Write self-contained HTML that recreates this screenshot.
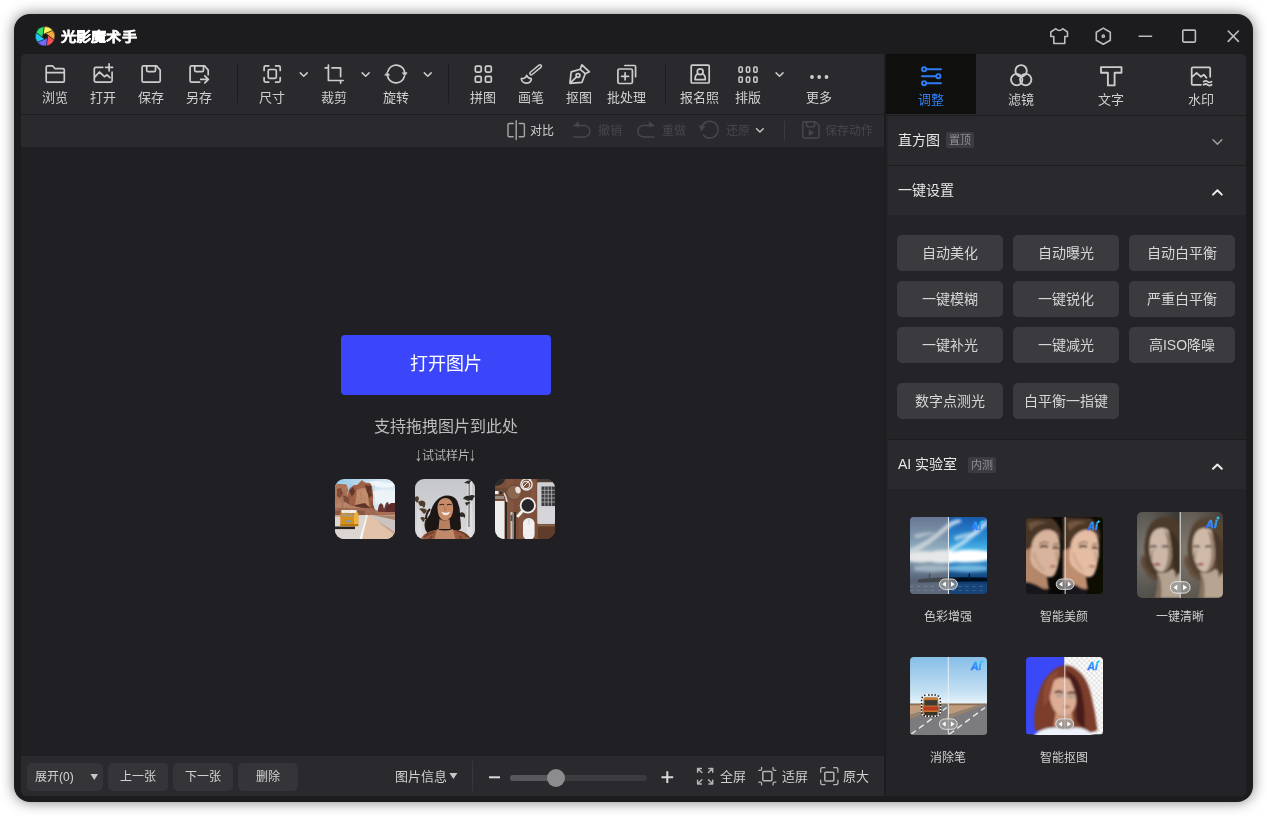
<!DOCTYPE html>
<html lang="zh-CN">
<head>
<meta charset="utf-8">
<title>光影魔术手</title>
<style>
*{box-sizing:border-box;margin:0;padding:0}
html,body{width:1267px;height:816px;overflow:hidden;background:#fff}
body{font-family:"Liberation Sans",sans-serif;position:relative;color:#d2d2d2;font-size:13px;line-height:1}
#root{position:absolute;left:0;top:0;width:1267px;height:816px;will-change:transform}
.abs{position:absolute}
#win{position:absolute;left:14px;top:14px;width:1239px;height:788px;background:#1c1c1e;border-radius:16px;box-shadow:0 0 14px rgba(0,0,0,.5)}
#title{position:absolute;left:60.5px;top:27.3px;font-size:13px;font-weight:bold;color:#fff;letter-spacing:0;line-height:20px;white-space:nowrap;-webkit-text-stroke:.3px #fff;transform:scaleX(1.165);transform-origin:0 0}
#left{position:absolute;left:21px;top:54px;width:863px;height:742px;background:#201f24;border-radius:5px 0 0 5px;overflow:hidden}
#tb1{position:absolute;left:0;top:0;width:863px;height:60px;background:#2a2a2e}
#tb2{position:absolute;left:0;top:61px;width:863px;height:32px;background:#2a2a2e}
#tbline{position:absolute;left:0;top:60px;width:863px;height:1px;background:#1d1d20}
#bb{position:absolute;left:0;top:702px;width:863px;height:40px;background:#2a2a2e}
.tl{position:absolute;top:90px;width:60px;margin-left:-30px;text-align:center;font-size:13px;line-height:15px;color:#cfcfcf;white-space:nowrap}
.sep{position:absolute;width:1px;background:#1c1c1f}
.t2{position:absolute;top:123.5px;font-size:12px;line-height:14px;color:#47474b;white-space:nowrap}
#right{position:absolute;left:886px;top:54px;width:360px;height:742px;background:#242328;border-radius:0 5px 4px 0;overflow:hidden}
.tab{position:absolute;top:0;width:90px;height:60px;background:#2a2a2e}
.tabl{position:absolute;top:92px;width:60px;margin-left:-30px;text-align:center;font-size:13px;line-height:15px;color:#cfcfcf}
.hdr{position:absolute;left:2px;width:358px;background:#2a2a2e}
.hl{position:absolute;left:12px;font-size:14px;line-height:16px;color:#e6e6e6;white-space:nowrap}
.badge{position:absolute;height:16px;width:28px;border-radius:2px;background:#3b3b40;color:#8e8e93;font-size:11px;line-height:16px;text-align:center}
.btn{position:absolute;width:106px;height:36px;border-radius:5px;background:#3a3a3f;color:#d6d6d6;font-size:14px;line-height:36px;text-align:center;white-space:nowrap}
.al{position:absolute;width:90px;margin-left:-45px;text-align:center;font-size:12px;line-height:14px;color:#d0d0d0;white-space:nowrap}
.bbtn{position:absolute;top:763px;height:28px;border-radius:5px;background:#353539;color:#d4d4d4;font-size:12px;line-height:28px;text-align:center;white-space:nowrap}
.bt{position:absolute;top:768.5px;font-size:13px;line-height:15px;color:#cfcfcf;white-space:nowrap}
#open{position:absolute;left:341px;top:335px;width:210px;height:60px;border-radius:4px;background:#3b46fa;color:#fff;font-size:18px;line-height:58px;text-align:center}
#hint{position:absolute;left:296px;top:417px;width:300px;text-align:center;font-size:16px;line-height:20px;color:#bdbdbd}
#try{position:absolute;left:346px;top:449px;width:200px;text-align:center;font-size:12px;line-height:15px;color:#b4b4b4}
.ar{display:inline-block;transform:translate(-.5px,2px) scale(1.25,1.6);transform-origin:50% 82%;font-weight:bold;width:6px;text-align:center}
.smp{position:absolute;top:479px;width:60px;height:60px;border-radius:9px;overflow:hidden}
.ai{position:absolute;overflow:hidden;border-radius:4px}
#ico{position:absolute;left:0;top:0;width:1267px;height:816px;pointer-events:none}
</style>
</head>
<body>
<div id="root">
<div id="win"></div>
<div id="title">光影魔术手</div>

<div id="left">
  <div id="tb1"></div><div id="tbline"></div><div id="tb2"></div>
  <div id="bb"></div>
</div>

<!-- toolbar labels -->
<div class="tl" style="left:55px">浏览</div>
<div class="tl" style="left:103px">打开</div>
<div class="tl" style="left:151px">保存</div>
<div class="tl" style="left:199px">另存</div>
<div class="sep" style="left:237px;top:64px;height:39px"></div>
<div class="tl" style="left:272px">尺寸</div>
<div class="tl" style="left:334px">裁剪</div>
<div class="tl" style="left:396px">旋转</div>
<div class="sep" style="left:448px;top:64px;height:39px"></div>
<div class="tl" style="left:483px">拼图</div>
<div class="tl" style="left:531px">画笔</div>
<div class="tl" style="left:579px">抠图</div>
<div class="tl" style="left:626.5px">批处理</div>
<div class="sep" style="left:665px;top:64px;height:39px"></div>
<div class="tl" style="left:699.5px">报名照</div>
<div class="tl" style="left:748px">排版</div>
<div class="tl" style="left:819px">更多</div>

<!-- secondary toolbar -->
<div class="t2" style="left:530px;color:#d0d0d0">对比</div>
<div class="t2" style="left:598px">撤销</div>
<div class="t2" style="left:662px">重做</div>
<div class="t2" style="left:726px">还原</div>
<div class="sep" style="left:784px;top:121px;height:20px;background:#3a3a3f"></div>
<div class="t2" style="left:825px">保存动作</div>

<!-- canvas -->
<div id="open">打开图片</div>
<div id="hint">支持拖拽图片到此处</div>
<div id="try"><span class="ar">↓</span>试试样片<span class="ar">↓</span></div>
<!-- sample photos -->
<svg class="smp" style="left:335px" viewBox="0 0 60 60">
<defs><linearGradient id="s1sky" x1="0" y1="0" x2="1" y2=".6"><stop offset="0" stop-color="#93c8e8"/><stop offset=".6" stop-color="#d4e8f2"/><stop offset="1" stop-color="#e6eef2"/></linearGradient>
<filter id="b06"><feGaussianBlur stdDeviation=".6"/></filter><filter id="b1"><feGaussianBlur stdDeviation="1"/></filter>
<filter id="grain" x="0" y="0" width="100%" height="100%"><feTurbulence type="fractalNoise" baseFrequency=".32" numOctaves="2" seed="4" result="n"/><feColorMatrix in="n" type="matrix" values="0 0 0 0 0  0 0 0 0 0  0 0 0 0 0  1.6 0 0 0 -.62"/></filter></defs>
<rect width="60" height="60" fill="url(#s1sky)"/>
<g filter="url(#b06)">
<path d="M34 3 q8-2 14 0 q6 2 12 0 v4 q-10 3-16 1 q-6-1-10-1z" fill="#f2f7fa" opacity=".9"/>
<path d="M38 12 q10-3 22 0 v12 q-10 3-20 0z" fill="#eef4f7" opacity=".9"/>
<path d="M0 6 l3-1 l5 0 l4 1 l1 6 l-1 5 l2 8 v8 h-14z" fill="#b07658"/>
<path d="M13 14 l2-5 l4-3 l3 0 l3-3 l2-2 l2 2 l3 1 l3 0 l2 3 l1 8 l0 10 l2 6 l2 4 v4 h-34z" fill="#a4644a"/>
<path d="M22 10 l8-1 l3 6 l1 12 l-8 4 l-6-4z" fill="#c48e6e"/>
<path d="M14 12 l4-4 l2 4 l-3 6z M30 6 l6 1 l1 10 l-3 2z M20 26 l10-2 l6 6 h-16z" fill="#63392c"/>
<path d="M2 10 l4-1 l2 6 l-3 4 l-3-2z M8 16 l5 2 l2 8 l-6-2z" fill="#7e4e3c"/>
<path d="M0 20 l10 3 l8 4 l10 2 h-28z" fill="#b98468"/>
<path d="M36 22 l2 4 l2 6 h-4z" fill="#8a5038"/>
<path d="M42 34 l2-8 l2-2 l2 2 l1 4 l2-6 l2-1 l1 3 v8z" fill="#6a3632"/>
<path d="M50 34 l2-7 l4-3 l4 0 v11z" fill="#5c2c2c"/>
<path d="M0 29 h38 l6 4 h16 v5 h-60z" fill="#a66e56"/>
<path d="M0 32 h30 v4 h-30z" fill="#8e5a46"/>
<path d="M0 36 h60 v24 h-60z" fill="#c8a48c"/>
<path d="M26 60 l6-23 l3-1 h2 l10 10 l13 10 v4z" fill="#e2c2a8"/>
<path d="M35 37 l25 16 v-12 l-22-5z" fill="#cbc4c0"/>
<path d="M38 36 l22 5 v-4z" fill="#a88470"/>
<path d="M0 60 v-22 l30-2 l3 0 l-3 6 l-4 18z" fill="#dcd6d2"/>
<path d="M24.500 60 l7-24 l1.300 0 l-5.800 24z" fill="#f6f6f4"/>
<path d="M0 47.500 h20 v2.600 h-20z" fill="#16100c" opacity=".9"/>
<rect x="5.300" y="32.500" width="18" height="14.500" rx="1.800" fill="#d68e1e"/>
<rect x="19" y="33.500" width="4.300" height="13" rx="1" fill="#eeb040"/>
<rect x="6.300" y="31" width="15.500" height="3" rx="1.400" fill="#f4f2ec"/>
<rect x="7" y="34.600" width="11" height="3.200" rx=".6" fill="#b49a72"/>
<rect x="11" y="41.500" width="5" height="1.800" fill="#7a9cb0"/>
<rect x="5.300" y="45" width="18" height="2.300" fill="#b87818"/>
</g>
<path d="M0 5 h40 v31 h-40z" filter="url(#grain)" fill="#000" opacity=".16"/>
</svg>
<svg class="smp" style="left:415px" viewBox="0 0 60 60">
<defs><linearGradient id="s2bg" x1="0" y1="0" x2="0" y2="1"><stop offset="0" stop-color="#c6c7cb"/><stop offset="1" stop-color="#d8d8da"/></linearGradient></defs>
<rect width="60" height="60" fill="url(#s2bg)"/>
<g filter="url(#b06)">
<path d="M52.500 0 h4.500 l.5 60 h-6z" fill="#e2e2e4" opacity=".8"/><path d="M53.600 2 h1.300 l-.3 46 h-1.300z" fill="#7a7872"/>
<path d="M49 4 q3-3 8-3 q-2 2-3 4 q-3-1-5-1z" fill="#2c2c28"/>
<path d="M48 20 q2-4 6-3 q3-2 6 0 q-2 2-3 5 q-2-2-4 0 q-3-2-5-2z M50 24 q3-2 6 0 q-3 0-4 3z" fill="#2a2a26"/>
<path d="M43 36 q2-4 6-2 q2 2 1 5 q-2-2-4-1 q-2-2-3-2z" fill="#2e2c28"/>
<path d="M2 30 h3.500 l1.500 30 h-5z" fill="#e0e0e2" opacity=".7"/>
<path d="M0 18 q3-2 4 1 q0 3-2 5 q-1-2-2-2z M3 23 q4-3 7 0 q1 3-1 6 q-2-3-4-2 q-1-2-2-4z M4 30 q4-2 8 1 q-1 3-3 4 q-2-3-5-5z M5 39 q3-2 5 0 q0 3-2 4 q-1-2-3-4z" fill="#4c3c2c"/>
<path d="M18 58 q-8-3-8-12 q1-6 5-11 q2-9 7-14 q5-5 11-4.500 q7 .5 9.500 6 q3 7 2.500 15 q1 7 1 12 q-4 4-8 6z" fill="#1e1612"/>
<path d="M12 40 q-3 6 0 12 M15 30 q-4 4-4 10" stroke="#2a1e18" stroke-width="2" fill="none"/>
<path d="M22.500 27 q1-7.500 8-8 q6.500 .4 7.500 8 q.8 7-2 11 q-3 3.600-6 3.600 q-4-.4-6-4.600 q-1.800-4.400-1.500-10z" fill="#c68c6a"/>
<path d="M26.500 32.500 q4 2.600 8.500 0 q-.8 3.600-4.300 3.800 q-3.400-.4-4.200-3.800z" fill="#f4ece6"/>
<path d="M24.500 26 q2.600-1.600 4.600 0 M32 26 q2.400-1.600 4.600 0" stroke="#3a261e" stroke-width="1.100" fill="none"/>
<path d="M29.500 28 q1 2.500 0 4" stroke="#a8704e" stroke-width="1.200" fill="none"/>
<path d="M24.500 40 q5 3 10 0 l1 10 h-12z" fill="#b87e5e"/>
<path d="M5 62 q3-9 15-11 q10 2 20 0 q14 2 17 11z" fill="#96583f"/>
<path d="M22 50 q8 3 16 0 l3 12 h-22z" fill="#c08a6a"/>
<path d="M9 58 q5-4 10-5 M42 52 q8 1 12 7 M14 61 l3-4 M47 61 l-2-4 M50 56 l3 2" stroke="#6e3c2a" stroke-width="1.300" fill="none"/>
</g>
</svg>
<svg class="smp" style="left:495px" viewBox="0 0 60 60">
<rect width="60" height="60" fill="#7b4f39"/>
<g filter="url(#b06)">
<path d="M12 0 h6 v60 h-6z M24 30 h5 v30 h-5z M36 0 h5 v20 h-5z" fill="#8a5a42" opacity=".6"/>
<path d="M0 0 h10 q-1 6-10 7z" fill="#2c2a2c"/>
<rect x="0" y="9" width="12" height="12" fill="#6a4836"/><rect x="0" y="12" width="3.500" height="3.200" fill="#efefef"/><rect x="5" y="13" width="2" height="2" fill="#2a2422"/><rect x="0" y="17" width="9" height="3" fill="#b0a49c" opacity=".7"/>
<rect x="0" y="22" width="9.500" height="38" fill="#ededed"/>
<rect x="10" y="22" width="2" height="38" fill="#2c2624"/>
<circle cx="19" cy="13.500" r="8.200" fill="#6e4c3a"/><circle cx="19" cy="13.500" r="6.800" fill="#8a6650"/><ellipse cx="23" cy="11" rx="2.600" ry="3.400" fill="#e8e2de" transform="rotate(-20 23 11)"/>
<path d="M9 14 q2 3 3 9" stroke="#d8d4d0" stroke-width="1.600" fill="none"/>
<circle cx="31.500" cy="5.400" r="5.600" fill="none" stroke="#ececec" stroke-width="1.400"/><circle cx="31" cy="6" r="3.600" fill="none" stroke="#dedede" stroke-width="1.200"/><path d="M28 8 l8-8" stroke="#e8e8e8" stroke-width="1"/>
<rect x="42.200" y="3.300" width="18" height="41.600" rx="1.500" fill="#d0d0d4"/>
<rect x="42.200" y="0" width="18" height="3" fill="#4a3a34"/>
<rect x="46.500" y="7.500" width="14" height="19.500" fill="#3a3a3e"/>
<path d="M46.500 11.300 h14 M46.500 15.200 h14 M46.500 19.100 h14 M46.500 23 h14 M49.800 7.500 v19.500 M53.200 7.500 v19.500 M56.600 7.500 v19.500" stroke="#b4b4b8" stroke-width=".8"/>
<rect x="43.500" y="29" width="17" height="15" fill="#d6d6da"/>
<circle cx="32.800" cy="26.400" r="8.100" fill="#f0f0f0"/><circle cx="32.800" cy="26.400" r="6.300" fill="#26262a"/>
<path d="M27 32.500 l-4 4.500" stroke="#f0f0f0" stroke-width="3" stroke-linecap="round"/>
<rect x="28" y="39" width="11.600" height="22" rx="5.600" fill="#f0f0f2"/><path d="M33.800 39.500 v6" stroke="#d0d0d2" stroke-width=".8"/>
<rect x="15.500" y="33" width="2" height="27" fill="#c4c4c8"/><rect x="19" y="33" width="2" height="27" fill="#2e2a28"/><rect x="17.600" y="34" width="1.200" height="26" fill="#8e8e90"/><rect x="15.500" y="36" width="2" height="6" fill="#56504c"/>
<rect x="43" y="47" width="17" height="13" rx="2" fill="#5e3c2a"/><rect x="43" y="45.600" width="17" height="1.800" fill="#84604a"/>
</g>
</svg>

<!-- bottom bar -->
<div class="bbtn" style="left:27px;width:76px;text-align:left;padding-left:8px">展开(0)</div>
<div class="bbtn" style="left:108px;width:60px">上一张</div>
<div class="bbtn" style="left:173px;width:60px">下一张</div>
<div class="bbtn" style="left:238px;width:60px">删除</div>
<div class="bt" style="left:395px">图片信息</div>
<div class="sep" style="left:472px;top:761px;height:30px;background:#38383c"></div>
<div class="abs" style="left:510px;top:775px;width:137px;height:6px;border-radius:3px;background:#3c3c40"></div>
<div class="abs" style="left:510px;top:775px;width:48px;height:6px;border-radius:3px;background:#58585c"></div>
<div class="abs" style="left:547px;top:769px;width:18px;height:18px;border-radius:9px;background:#8c8c8e"></div>
<div class="bt" style="left:719.5px">全屏</div>
<div class="bt" style="left:781.5px">适屏</div>
<div class="bt" style="left:843px">原大</div>

<!-- right panel -->
<div id="right">
  <div class="tab" style="left:0;width:360px;height:60.5px"></div>
  <div class="tab" style="left:0;background:#0f0f0e;height:59.6px"></div>
  <div class="hdr" style="top:62px;height:49px"></div>
  <div class="hdr" style="top:112px;height:48.700px"></div>
  <div class="hdr" style="top:386px;height:49px"></div>
  <div class="abs" style="left:0;top:60.5px;width:360px;height:1.5px;background:#1c1c1f"></div>
  <div class="abs" style="left:2px;top:111px;width:358px;height:1px;background:#1c1c1f"></div>
  <div class="abs" style="left:2px;top:385.300px;width:358px;height:1px;background:#1c1c1f"></div>
</div>
<div class="tabl" style="left:931px;color:#2f7df6">调整</div>
<div class="tabl" style="left:1021px">滤镜</div>
<div class="tabl" style="left:1111px">文字</div>
<div class="tabl" style="left:1201px">水印</div>

<div class="hl" style="left:898px;top:132px">直方图</div>
<div class="badge" style="left:946px;top:132px">置顶</div>
<div class="hl" style="left:898px;top:182px">一键设置</div>

<div class="btn" style="left:897px;top:235px">自动美化</div>
<div class="btn" style="left:1013px;top:235px">自动曝光</div>
<div class="btn" style="left:1129px;top:235px">自动白平衡</div>
<div class="btn" style="left:897px;top:281px">一键模糊</div>
<div class="btn" style="left:1013px;top:281px">一键锐化</div>
<div class="btn" style="left:1129px;top:281px">严重白平衡</div>
<div class="btn" style="left:897px;top:327px">一键补光</div>
<div class="btn" style="left:1013px;top:327px">一键减光</div>
<div class="btn" style="left:1129px;top:327px">高ISO降噪</div>
<div class="btn" style="left:897px;top:383px">数字点测光</div>
<div class="btn" style="left:1013px;top:383px">白平衡一指键</div>

<div class="hl" style="left:898px;top:456px">AI 实验室</div>
<div class="badge" style="left:968px;top:457px">内测</div>

<div class="al" style="left:948px;top:610px">色彩增强</div>
<div class="al" style="left:1064px;top:610px">智能美颜</div>
<div class="al" style="left:1180px;top:610px">一键清晰</div>
<div class="al" style="left:948px;top:751px">消除笔</div>
<div class="al" style="left:1064px;top:751px">智能抠图</div>

<!-- AI thumbnails -->
<svg width="0" height="0" style="position:absolute"><defs>
<filter id="f08"><feGaussianBlur stdDeviation=".8"/></filter><filter id="f12"><feGaussianBlur stdDeviation="1.2"/></filter><filter id="f15"><feGaussianBlur stdDeviation="1.5"/></filter><filter id="f25"><feGaussianBlur stdDeviation="2.5"/></filter>
<filter id="desat"><feColorMatrix type="saturate" values=".42"/></filter>
<filter id="brt"><feComponentTransfer><feFuncR type="linear" slope="1.13"/><feFuncG type="linear" slope="1.12"/><feFuncB type="linear" slope="1.1"/></feComponentTransfer></filter>
<linearGradient id="aig" x1="0" y1="1" x2="1" y2="0"><stop offset="0" stop-color="#3a58ff"/><stop offset="1" stop-color="#22c4ff"/></linearGradient>
<g id="hdl"><rect x="-9" y="-5.200" width="18" height="10.400" rx="5.200" fill="#9a9a9a" fill-opacity=".75" stroke="#e8e8e8" stroke-width=".9"/><path d="M-2.600 -2.600 v5.200 l-3.600-2.600z M2.600 -2.600 v5.200 l3.600-2.600z" fill="#fff"/></g>
<g id="aib"><text x="0" y="0" font-family="Liberation Sans, sans-serif" font-size="10.500" font-weight="bold" font-style="italic" fill="url(#aig)" stroke="url(#aig)" stroke-width=".35">Ai</text><path d="M11.200 -10.400 l.6 1.300 l1.300 .6 l-1.300 .6 l-.6 1.300 l-.6-1.300 l-1.300-.6 l1.300-.6z" fill="#2cc8ff"/></g>
</defs></svg>

<svg class="ai" style="left:909.6px;top:516.5px;width:77.5px;height:77.4px" viewBox="0 0 78 78">
<defs><linearGradient id="a1s" x1="0" y1="0" x2="0" y2="1"><stop offset="0" stop-color="#1a58ac"/><stop offset=".3" stop-color="#2e92d6"/><stop offset=".46" stop-color="#58c0ec"/><stop offset=".62" stop-color="#2a7cbc"/><stop offset=".8" stop-color="#103e76"/><stop offset="1" stop-color="#0c2c58"/></linearGradient>
<g id="a1"><rect width="78" height="78" fill="url(#a1s)"/>
<g filter="url(#f15)"><path d="M-4 34 q20-8 40-26 q6-5 14-6 l2 3 q-10 3-16 9 q-18 16-38 26z" fill="#dff0fb" opacity=".8"/>
<path d="M30 36 q22-8 40-28 l8-6 v6 q-20 20-46 32z" fill="#dff0fb" opacity=".75"/>
<path d="M4 18 q12-4 22-2 q-10 2-20 6z M44 20 q14-6 28-4 q-12 2-26 8z" fill="#e8f4fc" opacity=".6"/>
<path d="M-2 38 q10-5 24-3 q10-3 22 0 q14-4 36 0 v8 q-16 4-34 2 q-14 3-26 0 q-12 2-22-1z" fill="#ffffff"/>
<path d="M4 50 q18-3 36 0 q18-3 38 0 v4 q-20 3-38 0 q-18 3-36 0z" fill="#8cd0f2" opacity=".75"/></g>
<g filter="url(#f08)"><path d="M8 63 q20-3 70-2 v4 q-40 0-70 1z" fill="#06101e"/><rect x="19" y="57" width="1.400" height="5.500" fill="#101820"/><rect x="59" y="57" width="1.400" height="5.500" fill="#101820"/>
<path d="M0 67 h78 v11 h-78z" fill="#1c4c80" opacity=".7"/><path d="M0 70 h78 M0 74 h78" stroke="#4a80b4" stroke-width="1" stroke-dasharray="3 4" opacity=".6"/></g></g></defs>
<use href="#a1"/>
<g filter="url(#desat)"><svg x="0" y="0" width="38.700" height="78" viewBox="0 0 38.700 78"><use href="#a1"/><rect width="39" height="78" fill="#aeb8c0" opacity=".34"/></svg></g>
<rect x="38.200" y="0" width="1" height="78" fill="#e8eef2"/>
<use href="#hdl" x="38.700" y="67.700"/><use href="#aib" x="61.500" y="13.200"/>
</svg>

<svg class="ai" style="left:1025.7px;top:516.5px;width:77.5px;height:77.4px" viewBox="0 0 78 78">
<defs><g id="a2"><rect width="40" height="78" fill="#0a0806"/>
<g filter="url(#f12)"><path d="M-2 0 L26 1 Q36 8 36 24 L31 17 Q22 10 12 16 Q6 22 5 32 L-2 38 Z" fill="#4a3626"/>
<path d="M2 6 q10-4 20 0 q-10 0-18 8z" fill="#7a5e4a" opacity=".7"/>
<path d="M-2 34 L5 31 Q4 44 8 50 Q14 58 21 60 L23 73 L-2 69Z" fill="#b4866a"/>
<path d="M5 32 Q6 20 14 15 Q24 10 31 17 Q35 24 34 34 Q34.500 40 33 44 Q32 52 29 58 Q26 62 21 60 Q12 56 6 48 Q3 42 5 32Z" fill="#d8b49c"/>
<path d="M-2 65 Q12 66 26 79 L-2 79Z" fill="#15151c"/>
<path d="M14 30.500 q4-2.400 8-.4 M27 31.500 q3-1.500 6 .500" stroke="#2a1c16" stroke-width="2" fill="none"/>
<path d="M13 27 q5-3 10-1 M27 28 q3-2 6-.5" stroke="#5a4030" stroke-width="1" fill="none"/>
<path d="M23 49.500 q4-1.400 8 0 q-3 2.800-8 0z" fill="#9a5648"/><path d="M30 35 q3 6 .5 9.500" stroke="#b08a72" stroke-width="1.600" fill="none"/><path d="M8 36 q2 10 10 18" stroke="#c09a82" stroke-width="3" fill="none" opacity=".6"/></g></g></defs>
<use href="#a2"/><g transform="translate(39.400 0)" filter="url(#brt)"><use href="#a2"/></g>
<rect x="38.900" y="0" width="1" height="78" fill="#dcdcdc"/>
<use href="#hdl" x="39.400" y="67.700"/><use href="#aib" x="62" y="13.200"/>
</svg>

<svg class="ai" style="left:1137px;top:512px;width:86px;height:86px;border-radius:5px" viewBox="0 0 86 86">
<defs><radialGradient id="a3bg" cx=".15" cy=".45" r=".9"><stop offset="0" stop-color="#7a766f"/><stop offset="1" stop-color="#3a3632"/></radialGradient>
<g id="a3"><rect width="44" height="86" fill="url(#a3bg)"/>
<g filter="url(#f12)"><path d="M10 20 q4-14 18-15 q12 0 16 10 v71 h-24 q4-10 0-18 q-7-2-9-10 q-6-6-3-14 q-2-10 2-24z" fill="#4c3a2c"/>
<path d="M7 44 q-3 8 3 14 q2 6 8 8" stroke="#5e4a3a" stroke-width="4" fill="none"/>
<path d="M13 28 q2-12 12-12 q8 0 10 10 q2 10-1 22 q-2 10-9 12 q-6 0-9-8 q-5-10-3-24z" fill="#cdb8a8"/>
<path d="M27 18 q7 4 8 16 q1 14-3 22 q-3 4-6 4 q5-8 5-20 q0-12-4-22z" fill="#8a7262" opacity=".8"/>
<path d="M20 60 q8 3 15-3 l9 6 v23 h-26 q4-14 2-26z" fill="#b4a290"/>
<path d="M20 60 q6 8 4 26 h-6 q4-14 2-26z" fill="#6a5646" opacity=".7"/>
<path d="M31 18 q10 4 12 20 q2 18-4 28 q-2-10-4-22 q0-14-4-26z" fill="#3e2e22"/>
<path d="M16.500 52 q3.500-1.600 7.500 0 q-3.500 3.200-7.500 0z" fill="#8c2838"/><path d="M13.500 35 q3-1.600 6 0 M25 35 q3-1.600 6 0" stroke="#3a3038" stroke-width="1.800" fill="none"/>
<path d="M16.500 38 q-3 5-1 9" stroke="#a08874" stroke-width="1.600" fill="none"/></g></g></defs>
<use href="#a3"/><g transform="translate(43.200 0)"><use href="#a3"/><rect width="44" height="86" fill="#ffd8b0" opacity=".06"/></g>
<rect x="42.600" y="0" width="1.200" height="86" fill="#d8d8d8"/>
<g transform="translate(43.200 75.400) scale(1.100)"><use href="#hdl"/></g><g transform="translate(68.500 15.500) scale(1.120)"><use href="#aib"/></g>
</svg>

<svg class="ai" style="left:909.6px;top:657.4px;width:77.4px;height:77.3px" viewBox="0 0 78 78">
<defs><linearGradient id="a4s" x1="0" y1="0" x2="0" y2="1"><stop offset="0" stop-color="#86bee8"/><stop offset=".45" stop-color="#c4e0f2"/><stop offset=".6" stop-color="#e6f3fa"/><stop offset=".61" stop-color="#c0a080"/><stop offset="1" stop-color="#c0a080"/></linearGradient>
<g id="a4"><rect width="40" height="78" fill="url(#a4s)"/><g filter="url(#f08)"><path d="M0 47 h40 v2 h-40z" fill="#8a6e54"/><path d="M0 49 h40 v10 h-40z" fill="#c09c7c"/>
<path d="M-2 80 v-21 l34-11 h8 v34z" fill="#7c7c7e"/><path d="M1 78 l36-27" stroke="#ececec" stroke-width="1.400" stroke-dasharray="6 4" fill="none"/><path d="M-2 60 l36-12 l1 1 l-37 14z" fill="#9c8468"/></g></g></defs>
<use href="#a4"/><g transform="translate(38.600 0)"><use href="#a4"/></g>
<g filter="url(#f08)"><rect x="13.500" y="40.500" width="15" height="18" rx="2" fill="#c87a30"/><rect x="14.500" y="43.500" width="13" height="5.500" fill="#3c3a36"/><rect x="13.500" y="50" width="15" height="4" fill="#b83a20"/><rect x="14.500" y="55.500" width="13" height="3.500" fill="#3a3028"/></g>
<rect x="11.600" y="38.400" width="19" height="21.400" rx="5" fill="none" stroke="#fff" stroke-width="1.400" stroke-dasharray="1.600 1.600"/><rect x="11.600" y="38.400" width="19" height="21.400" rx="5" fill="none" stroke="#222" stroke-width="1.400" stroke-dasharray="1.600 1.600" stroke-dashoffset="1.600"/>
<rect x="38.100" y="0" width="1" height="78" fill="#e8f0f4"/>
<use href="#hdl" x="38.600" y="67.700"/><use href="#aib" x="61.500" y="13.200"/>
</svg>

<svg class="ai" style="left:1025.8px;top:657.4px;width:77.4px;height:77.3px" viewBox="0 0 78 78">
<defs><pattern id="chk" width="5" height="5" patternUnits="userSpaceOnUse"><rect width="5" height="5" fill="#fff"/><rect width="2.500" height="2.500" fill="#e2e2e2"/><rect x="2.500" y="2.500" width="2.500" height="2.500" fill="#e2e2e2"/></pattern></defs>
<rect width="39" height="78" fill="#3b48f8"/><rect x="39" width="39" height="78" fill="url(#chk)"/>
<g filter="url(#f12)"><path d="M9 74 q-3-16 3-34 q4-20 20-30 q10-4 18 2 q12 8 16 28 q4 16 6 34 q-8 4-20 2 l-30 2z" fill="#7c3c2a"/>
<path d="M24 30 q4-10 14-9 q10 1 13 10 q2 10-2 20 q-4 9-10 10 q-8-1-12-10 q-5-10-3-21z" fill="#dcac94"/>
<path d="M40 14 q12 4 16 20 q4 18 3 38 q-9-4-9-16 q2-14-2-24 q-4-10-8-18z" fill="#4a1e1a"/>
<path d="M20 24 q4-8 14-10 q-6 8-8 18 q-2 12-8 18 q-2-14 2-26z" fill="#8e4a34"/>
<path d="M30 56 q8 6 16 0 l2 14 h-20z" fill="#c8987e"/>
<path d="M6 82 q6-10 24-11 q10 3 20 0 q14 1 20 11z" fill="#eef2fa"/>
<path d="M29 36 q4-2.400 8 0 M42 37 q4-2.400 7 0" stroke="#3a2420" stroke-width="1.800" fill="none"/><path d="M31 38.500 q2.500 1.500 5 0 M43 39.500 q2.500 1.500 5 0" stroke="#5a8aa0" stroke-width="1.200" fill="none"/><path d="M37 50 q4-1.600 8 0 q-4 3-8 0z" fill="#a05a4c"/></g>
<rect x="38.600" y="0" width="1" height="78" fill="#f0f0f0" opacity=".9"/>
<use href="#hdl" x="39" y="67.700"/><use href="#aib" x="62" y="13.200"/>
</svg>

<svg id="ico" viewBox="0 0 1267 816" fill="none" stroke="#cdcdcd" stroke-width="1.7" stroke-linecap="round" stroke-linejoin="round">
<!-- logo -->
<g stroke="#1c1c1e" stroke-width="0.6" stroke-linejoin="miter"><path d="M42.83 34.44 L43.94 26.52 A9.8 9.8 0 0 1 52.97 30.34 Z" fill="#fdf25a"/><path d="M45.56 33.33 L52.97 30.34 A9.8 9.8 0 0 1 54.18 40.07 Z" fill="#f2ac3c"/><path d="M47.88 35.15 L54.18 40.07 A9.8 9.8 0 0 1 46.36 45.98 Z" fill="#f45252"/><path d="M47.47 38.06 L46.36 45.98 A9.8 9.8 0 0 1 37.33 42.16 Z" fill="#7468fc"/><path d="M44.74 39.17 L37.33 42.16 A9.8 9.8 0 0 1 36.12 32.43 Z" fill="#1ec8fa"/><path d="M42.42 37.35 L36.12 32.43 A9.8 9.8 0 0 1 43.94 26.52 Z" fill="#2ee070"/></g>

<!-- window controls -->
<g stroke="#bdbdbd" stroke-width="1.6">
<path d="M1055.8 28.7 Q1059.3 32.4 1062.7 28.7 L1067.5 32 V36.5 H1064.8 V43.5 H1053.8 V36.5 H1050.8 V32 Z"/>
<path d="M1103.3 28.1 L1110.3 32.2 V40.2 L1103.3 44.3 L1096.3 40.2 V32.2 Z"/>
<circle cx="1103.3" cy="36.2" r="1.1" stroke-width="1.5"/>
<path d="M1139.2 36.2 H1151.5"/>
<rect x="1182.8" y="30.1" width="12.6" height="12" rx="1"/>
<path d="M1228.2 31 L1238.4 41.4 M1238.4 31 L1228.2 41.4"/>
</g>

<!-- main toolbar -->
<g id="tbi">
<path d="M46.2 67.3 q0-1.5 1.5-1.5 h4.8 l2.6 2.9 h8 q1.2 0 1.2 1.2 v11.1 q0 1.2-1.2 1.2 h-15.7 q-1.2 0-1.2-1.2z M46.2 72.6 h18"/>
<path d="M102.8 67.3 h-7 q-1.5 0-1.5 1.5 v11.8 q0 1.5 1.5 1.5 h14.8 q1.5 0 1.5-1.5 v-8.6 M109.1 63.8 v7 M105.6 67.3 h7 M94.5 77.3 l4.9-5.3 l5.1 4.7 l2.5-1.9 l2.9 2.9"/>
<path d="M143.6 65.8 h12.9 l3.7 4.3 v10.6 q0 1.5-1.5 1.5 h-15.1 q-1.5 0-1.5-1.5 v-13.4 q0-1.5 1.5-1.5z M146.7 65.8 v4.4 q0 1.5 1.5 1.5 h5.8 q1.5 0 1.5-1.5 v-4.4"/>
<path d="M199.7 82.2 h-8.1 q-1.5 0-1.5-1.5 v-13.4 q0-1.5 1.5-1.5 h12.9 l3.7 4.3 v4.6 M194.7 65.8 v4.4 q0 1.5 1.5 1.5 h5.8 q1.5 0 1.5-1.5 v-4.4 M200.7 79.3 h7.7 M204.8 75.8 l3.6 3.5 l-3.6 3.6"/>
<path d="M264.1 70.5 v-3.1 q0-1.5 1.5-1.5 h3.1 M275.6 65.9 h3.1 q1.5 0 1.5 1.5 v3.1 M280.2 77.5 v3.1 q0 1.5-1.5 1.5 h-3.1 M268.7 82.1 h-3.1 q-1.5 0-1.5-1.5 v-3.1"/>
<rect x="268.2" y="69.5" width="8.1" height="8.8" rx="1.3"/>
<path d="M328.4 65 v15.5 h14.7 M325.2 67.9 h3.2 M332 67.9 h8.6 v8.7 M340.6 80.5 v2.6"/>
<path d="M387.8 71.4 A8.7 8.7 0 0 1 404.8 72.6 M404.4 76.6 A8.7 8.7 0 0 1 387.4 75.4"/>
<path d="M402.7 72.8 h4.4 l-2.2 2.8z M385.100 75.2 h4.4 l-2.2-2.8z" fill="#cdcdcd" stroke-width="0.8"/>
<rect x="475.3" y="66.2" width="5.9" height="5.9" rx="1.3"/><rect x="485.4" y="66.2" width="5.9" height="5.9" rx="1.3"/>
<rect x="475.3" y="76.3" width="5.9" height="5.9" rx="1.3"/><rect x="485.4" y="76.3" width="5.9" height="5.9" rx="1.3"/>
<rect x="-7.1" y="-1.45" width="14.2" height="2.9" rx="1.45" transform="translate(535.6 69.8) rotate(-39.5)" stroke-width="1.5"/>
<path d="M526.6 75.4 C526 77.5 523.8 78.6 521.3 78.6 C521.6 81.6 524.2 83.4 527 83.2 C529.8 83 531.6 80.8 531.3 78.6 C529.3 78.6 527.4 77.2 526.6 75.4z"/>
<path d="M569.9 83.3 L571.2 71.9 L580.2 69.3 L585.2 73.7 L582 82.3 Z M580.2 69.3 L581.9 64.8 L589.4 71.8 L585.2 73.7 M570 83.2 L576.6 76.9"/>
<circle cx="578" cy="75.5" r="1.9"/>
<rect x="617.9" y="69" width="14.5" height="14.5" rx="1.5"/>
<path d="M625.1 72.8 v7 M621.6 76.3 h7 M624.9 65.5 h9.4 q1.3 0 1.3 1.3 v9.9"/>
<rect x="691.2" y="65.2" width="18" height="17.8" rx="1"/>
<circle cx="700.2" cy="71.8" r="2.9"/>
<path d="M697.9 73.8 C695.6 74.8 695 76.9 695.1 79.6 h10.2 C705.4 76.9 704.8 74.8 702.5 73.8"/>
<g stroke-width="1.5"><rect x="739" y="67" width="3.3" height="5.2" rx="1"/><rect x="746.4" y="67" width="3.3" height="5.2" rx="1"/><rect x="753.8" y="67" width="3.3" height="5.2" rx="1"/>
<rect x="739" y="77.1" width="3.3" height="5.2" rx="1"/><rect x="746.4" y="77.1" width="3.3" height="5.2" rx="1"/><rect x="753.8" y="77.1" width="3.3" height="5.2" rx="1"/></g>
<g fill="#cdcdcd" stroke="none"><circle cx="812" cy="77" r="1.9"/><circle cx="819.2" cy="77" r="1.9"/><circle cx="826.5" cy="77" r="1.9"/></g>
<g stroke-width="1.5"><path d="M300.3 72.9 l3.45 3.4 l3.45-3.4"/><path d="M362.2 72.9 l3.45 3.4 l3.45-3.4"/><path d="M424.3 72.9 l3.45 3.4 l3.45-3.4"/><path d="M776.1 72.9 l3.45 3.4 l3.45-3.4"/></g>
</g>

<!-- secondary toolbar -->
<g stroke="#a6a6a6" stroke-width="1.4"><path d="M513.2 123.5 h-4 q-1.2 0-1.2 1.2 v10.8 q0 1.2 1.2 1.2 h4 M519.2 123.5 h4 q1.2 0 1.2 1.2 v10.8 q0 1.2-1.2 1.2 h-4 M516.2 120.8 v18.8"/></g>
<g stroke="#47474c" stroke-width="1.5">
<path d="M578 125.6 h6.2 a5.7 5.7 0 0 1 0 11.4 h-10.4"/><path d="M573.4 125.7 L578.6 121.6 V126.6z" fill="#47474c" stroke-width="0.6"/>
<path d="M649.7 125.6 h-6.2 a5.7 5.7 0 0 0 0 11.4 h10.4"/><path d="M654.3 125.7 L649.1 121.6 V126.6z" fill="#47474c" stroke-width="0.6"/>
<path d="M701.9 126.6 A8.4 8.4 0 1 1 703.4 135.2"/><path d="M699.5 125.6 L704.9 126.6 L701.3 130.9z" fill="#47474c" stroke-width="0.6"/>
<path d="M804.3 121.8 h11 l3.7 3.7 v10.9 q0 1.5-1.5 1.5 h-13.2 q-1.5 0-1.5-1.5 v-13.1 q0-1.5 1.5-1.5z M806.6 121.8 v4 q0 1 1 1 h6 q1 0 1-1 v-4"/><path d="M809 130 V135.6 L813.6 132.8z" fill="#47474c" stroke-width="0.6"/>
</g>
<path d="M756.6 128.8 l3.3 3.2 l3.3-3.2" stroke="#c4c4c4" stroke-width="1.5"/>

<!-- right tabs -->
<g stroke="#2f7df6" stroke-width="1.9"><circle cx="924.1" cy="69.3" r="2.1"/><path d="M926.8 69.3 H941 M922 76.2 H935.7 M926.8 83.2 H941"/><circle cx="938.4" cy="76.2" r="2.1"/><circle cx="924.1" cy="83.2" r="2.1"/></g>
<g stroke-width="1.85"><circle cx="1021.1" cy="70.8" r="5.7"/><circle cx="1016.7" cy="79.6" r="5.7"/><circle cx="1025.7" cy="79.6" r="5.7"/>
<path d="M1101 67.1 H1121.5 V72.7 H1114.6 V85.4 H1107.9 V72.7 H1101 Z"/>
<path d="M1201 84.8 h-8.3 q-1 0-1-1 v-15.4 q0-1 1-1 h16.5 q1 0 1 1 v8.4 M1191.9 77.2 l4.7-4.3 l4.4 3.9 l2.8-2.2 l2.7 3.3 M1203.6 81.6 q2-1.6 4 0 t4 0 M1203.6 84.8 q2-1.6 4 0 t4 0" stroke-width="1.75"/></g>

<!-- section chevrons -->
<path d="M1213 139.8 l4.4 4.3 l4.4-4.3" stroke="#9c9c9c" stroke-width="1.5"/>
<path d="M1213 194.6 l4.4-4.3 l4.4 4.3" stroke="#ececec" stroke-width="2"/>
<path d="M1213 468.8 l4.4-4.3 l4.4 4.3" stroke="#ececec" stroke-width="2"/>

<!-- bottom bar -->
<g fill="#c6c6c6" stroke="none"><path d="M90.5 774 h7.6 l-3.8 6z"/><path d="M449.4 773 h8 l-4 5.9z"/></g>
<g stroke="#dadada" stroke-width="2" stroke-linecap="butt"><path d="M489 777.3 H500"/><path d="M661.5 777.2 H673.2 M667.3 771.3 V783"/></g>
<g stroke="#b4b4b4" stroke-width="1.3">
<path d="M697.6 772.2 v-3.8 h3.8 M697.8 768.6 l4 4 M708.9 768.4 h3.8 v3.8 M712.5 768.6 l-4 4 M697.6 780.200 v3.8 h3.8 M697.8 783.8 l4-4 M708.9 784 h3.8 v-3.8 M712.5 783.8 l-4-4" stroke-width="1.45"/>
<rect x="762.8" y="771.6" width="9.1" height="9.2" rx="1" stroke-width="1.5"/>
<path d="M758.8 770.3 h1.6 q1.2 0 1.2-1.2 v-1.6 M775.9 770.3 h-1.6 q-1.2 0-1.2-1.2 v-1.6 M758.8 782.1 h1.6 q1.2 0 1.2 1.2 v1.6 M775.9 782.1 h-1.6 q-1.2 0-1.2 1.2 v1.6"/>
<rect x="824.8" y="772.2" width="9" height="8.8" rx="1" stroke-width="1.5"/>
<path d="M820.7 772.3 v-3 q0-1.6 1.6-1.6 h2.6 M833.7 767.7 h2.6 q1.6 0 1.6 1.6 v3 M837.9 780.1 v3 q0 1.6-1.6 1.6 h-2.6 M824.9 784.7 h-2.6 q-1.6 0-1.6-1.6 v-3"/>
</g>
</svg>
</div>
</body>
</html>
